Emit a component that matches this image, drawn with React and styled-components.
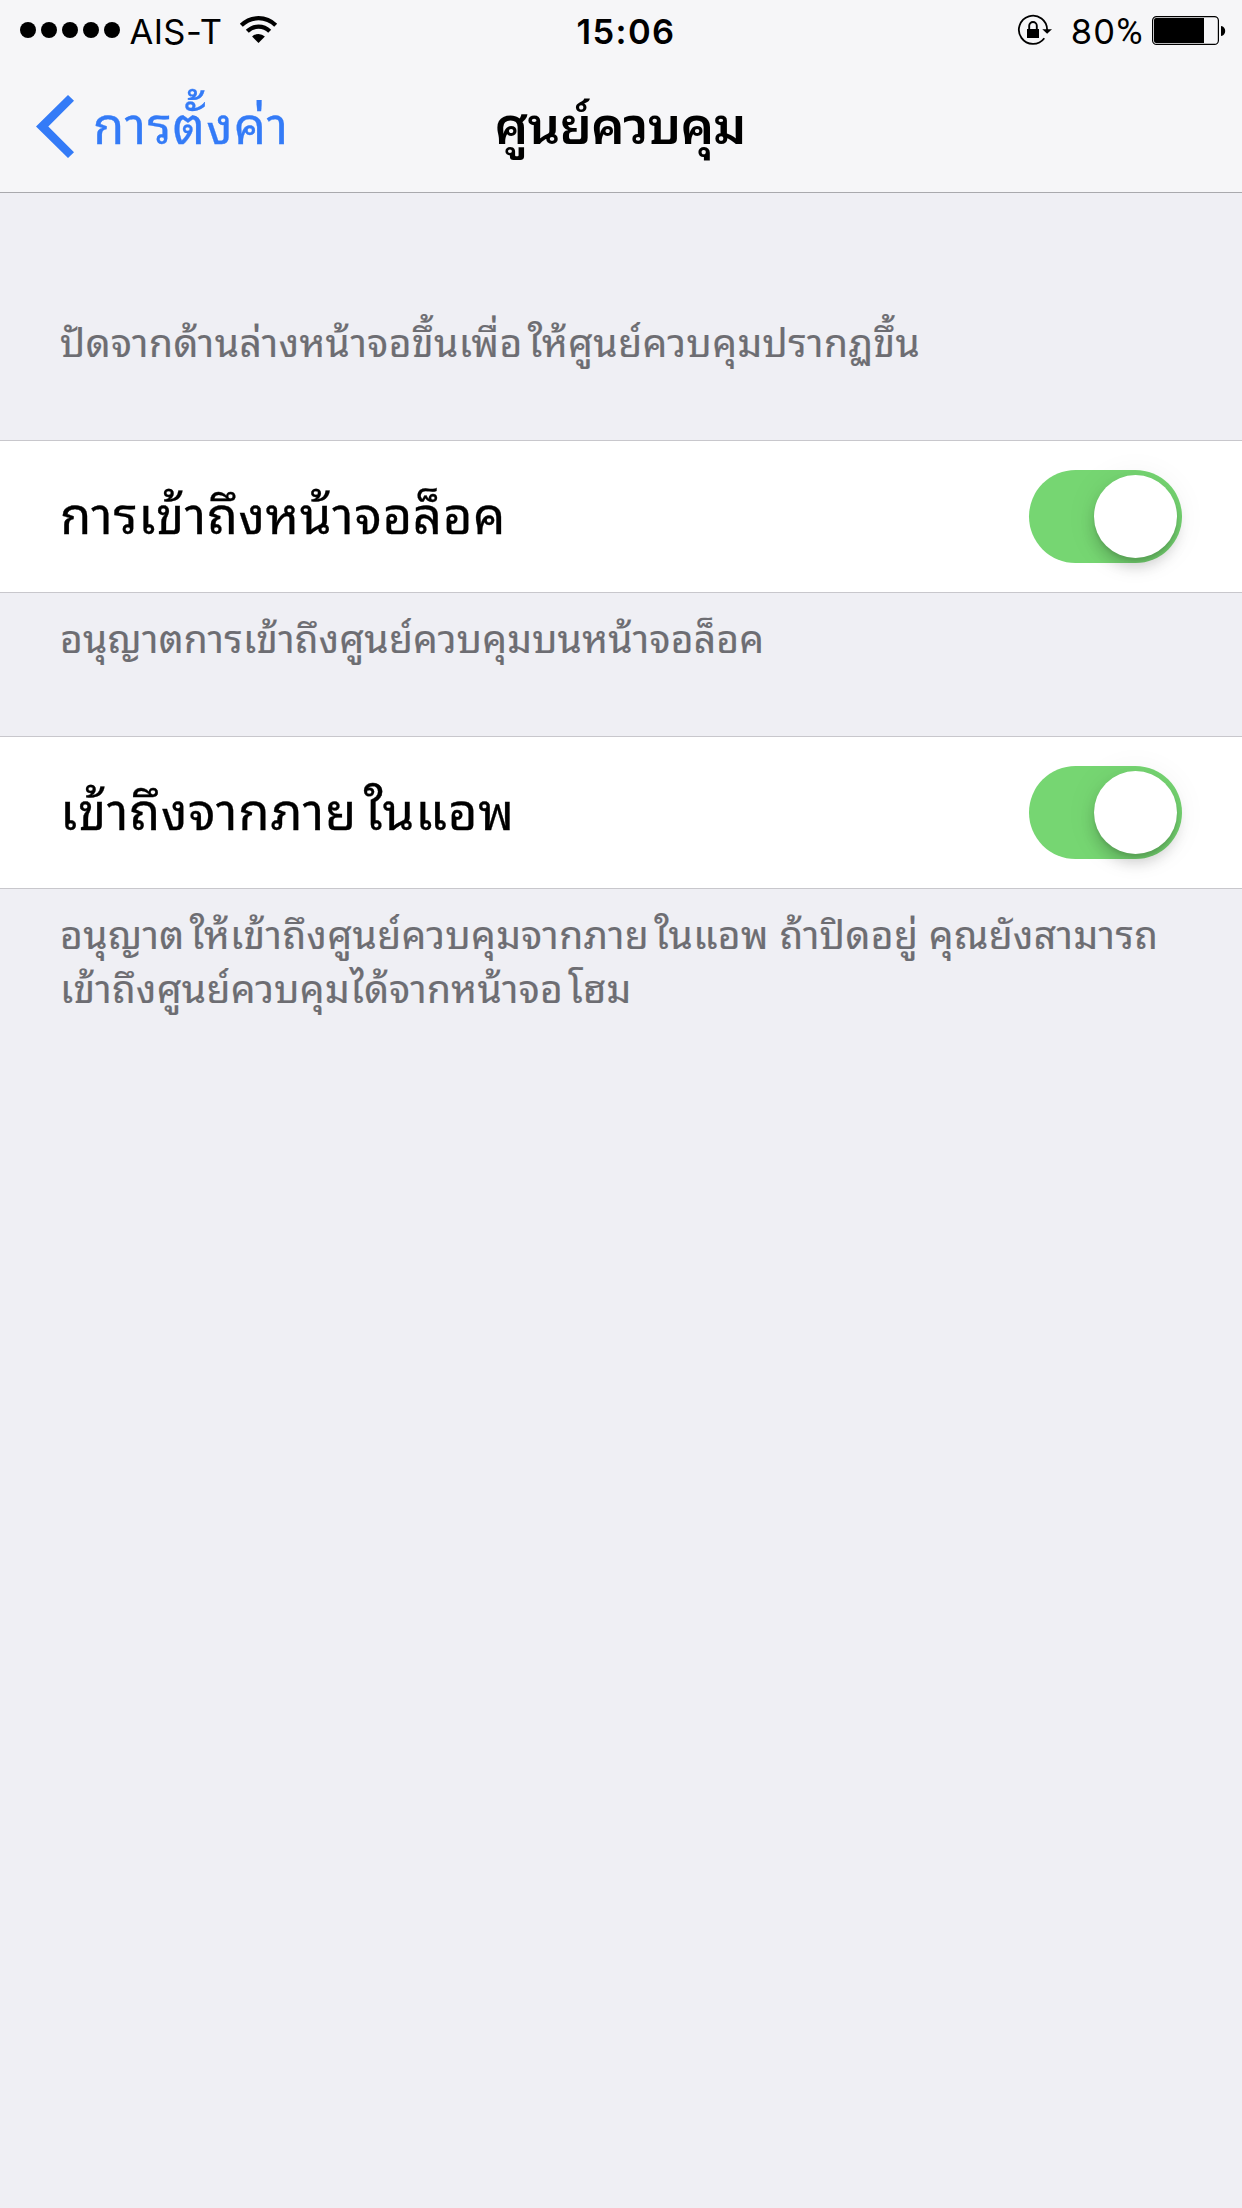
import React, { Fragment } from 'react'
import styled, { createGlobalStyle } from 'styled-components'


const App = () => (
  <Screen>
    <GlobalStyle />
    <StatusBar>
      <StatusGroup>
        <Signal>
          {[0, 1, 2, 3, 4].map(i => <Dot key={i} />)}
        </Signal>
        <Carrier>AIS-T</Carrier>
        <WifiIcon />
      </StatusGroup>
      <Clock>15:06</Clock>
      <StatusGroup $end>
        <RotationLockIcon />
        <Charge>80<Percent>%</Percent></Charge>
        <BatteryIcon />
      </StatusGroup>
    </StatusBar>
    <NavBar>
      <Back>
        <BackIcon />
        <BackText>การตั้งค่า</BackText>
      </Back>
      <Title>ศูนย์ควบคุม</Title>
    </NavBar>
    <Intro>
      <Note $spacing={0.45}><Thai>ปัดจากด้านล่างหน้าจอขึ้นเพื่อให้ศูนย์ควบคุมปรากฏขึ้น</Thai></Note>
    </Intro>
    {settings.map(setting => (
      <Fragment key={setting.label}>
        <Row>
          <Label $spacing={setting.spacing}><Thai>{setting.label}</Thai></Label>
          <Toggle><Knob /></Toggle>
        </Row>
        <Footer>
          {setting.notes.map(note => (
            <Note key={note.text} $spacing={note.spacing}><Thai>{note.text}</Thai></Note>
          ))}
        </Footer>
      </Fragment>
    ))}
  </Screen>
)

// ใ and โ get some room in front
const Thai = ({ children }) => (
  children.split(/([ใโ])/).map((part, i) => (
    i % 2 ? <Kern key={i}>{part}</Kern> : <Fragment key={i}>{part}</Fragment>
  ))
)

const WifiIcon = () => (
  <svg width="40" height="32" viewBox="238 14 40 32" fill="none" stroke="#000" strokeWidth="4.2">
    <path d="M241.3 25.3A24.3 24.3 0 0 1 275.7 25.3" />
    <path d="M247.3 31.3A15.8 15.8 0 0 1 269.7 31.3" />
    <path d="M258.5 43L252.1 36.6A9.2 9.2 0 0 1 264.9 36.6Z" fill="#000" stroke="none" />
  </svg>
)

const RotationLockIcon = () => (
  <svg width="36" height="32" viewBox="1015 14 36 32" fill="none" stroke="#000">
    <path d="M1042.3 38.2A14.1 14.1 0 1 1 1045.1 30" strokeWidth="1.8" />
    <path d="M1040.3 29.3H1050L1045.1 33.8Z" fill="#000" stroke="none" />
    <path d="M1027.2 29.5V25.8A3.8 3.8 0 0 1 1034.8 25.8V29.5" strokeWidth="1.9" />
    <rect x="1025" y="29" width="12" height="9" fill="#000" stroke="none" />
  </svg>
)

const BatteryIcon = () => (
  <svg width="74" height="32" viewBox="1152 14 74 32">
    <rect x="1152.6" y="16.6" width="65.8" height="27.8" rx="4" fill="none" stroke="#000" strokeWidth="1.2" />
    <path d="M1156 18H1204V43H1156A2 2 0 0 1 1154 41V20A2 2 0 0 1 1156 18Z" />
    <path d="M1221 26C1223.8 26.4 1225.2 28.3 1225.2 31S1223.8 35.6 1221 36Z" />
  </svg>
)

const BackIcon = () => (
  <svg width="38" height="64" viewBox="37 94 38 64">
    <path d="M69 95L75 100.7L49.3 126.5L75 152.3L69 158L37 126.5Z" fill="#347bf7" />
  </svg>
)

const settings = [
  {
    label: 'การเข้าถึงหน้าจอล็อค',
    spacing: 0.62,
    notes: [
      { text: 'อนุญาตการเข้าถึงศูนย์ควบคุมบนหน้าจอล็อค', spacing: 0.25 },
    ],
  },
  {
    label: 'เข้าถึงจากภายในแอพ',
    spacing: 0.8,
    notes: [
      { text: 'อนุญาตให้เข้าถึงศูนย์ควบคุมจากภายในแอพ ถ้าปิดอยู่ คุณยังสามารถ', spacing: 0.41 },
      { text: 'เข้าถึงศูนย์ควบคุมได้จากหน้าจอโฮม', spacing: 0.31 },
    ],
  },
]

const GlobalStyle = createGlobalStyle`
  body {
    margin: 0;
    background: #efeff4;
  }

  svg {
    display: block;
    flex: none;
  }
`

const Screen = styled.div`
  min-height: 2208px;
  background: #efeff4;
  color: #000;
  font-family: "Noto Sans Thai Looped", Loma, "Noto Sans", sans-serif;
  white-space: nowrap;
`

const Kern = styled.span`
  padding-left: 0.13em;
`

const StatusBar = styled.div`
  display: grid;
  grid-template-columns: 1fr auto 1fr;
  align-items: center;
  height: 60px;
  padding: 0 16px 0 20px;
  background: #f6f6f8;
  font-family: Inter, "Liberation Sans", sans-serif;
  font-size: 34.5px;
  line-height: 42px;
`

const StatusGroup = styled.div`
  display: flex;
  align-items: center;
  justify-content: ${p => p.$end ? 'flex-end' : 'flex-start'};
`

const Signal = styled.div`
  display: flex;
  gap: 5px;
`

const Dot = styled.span`
  width: 16px;
  height: 16px;
  border-radius: 50%;
  background: #000;
`

const Carrier = styled.span`
  margin: 4px 16px 0 9.5px;
  letter-spacing: 0.4px;
`

const Clock = styled.span`
  margin: 4px 0 0 6px;
  font-weight: 600;
  letter-spacing: 1.4px;
`

const Charge = styled.span`
  margin: 4px 9.5px 0 18px;
  letter-spacing: 1.1px;
`

const Percent = styled.span`
  font-family: Roboto, sans-serif;
  font-size: 36px;
  letter-spacing: 0;
`

const NavBar = styled.div`
  display: grid;
  grid-template-columns: 1fr auto 1fr;
  align-items: center;
  box-sizing: border-box;
  height: 133px;
  padding: 0 38px 0 36px;
  border-bottom: 1px solid #a9a9ad;
  background: #f6f6f8;
  font-size: 51px;
  line-height: 80px;
`

const Back = styled.div`
  display: flex;
  align-items: center;
  gap: 19px;
  color: #347bf7;
`

const BackText = styled.span`
  padding-bottom: 10px;
  letter-spacing: 1.1px;
  -webkit-text-stroke: 0.3px;
`

const Title = styled.span`
  padding-bottom: 10px;
  font-weight: 600;
  letter-spacing: -0.8px;
`

const Intro = styled.div`
  height: 127px;
  padding: 120px 60px 0;
`

const Note = styled.div`
  color: #6d6d72;
  font-size: 39px;
  line-height: 54px;
  letter-spacing: ${p => p.$spacing}px;
  -webkit-text-stroke: 0.2px;
`

const Row = styled.div`
  display: flex;
  align-items: center;
  justify-content: space-between;
  box-sizing: border-box;
  height: 153px;
  padding: 0 60px;
  border-top: 1px solid #c8c7cc;
  border-bottom: 1px solid #c8c7cc;
  background: #fff;
`

const Label = styled.span`
  padding-bottom: 11px;
  font-size: 51px;
  line-height: 80px;
  letter-spacing: ${p => p.$spacing}px;
  -webkit-text-stroke: 0.3px;
`

const Toggle = styled.div`
  display: flex;
  justify-content: flex-end;
  box-sizing: border-box;
  width: 153px;
  height: 93px;
  padding: 5px;
  border-radius: 47px;
  background: #76d672;
`

const Knob = styled.span`
  width: 83px;
  height: 83px;
  border-radius: 50%;
  background: #fff;
  box-shadow: 0 2px 30px 4px rgba(0, 0, 0, 0.05), 0 9px 14px rgba(0, 0, 0, 0.17), 0 3px 3px rgba(0, 0, 0, 0.08);
`

const Footer = styled.div`
  box-sizing: border-box;
  height: 143px;
  padding: 16px 60px 0;
`

export default App
